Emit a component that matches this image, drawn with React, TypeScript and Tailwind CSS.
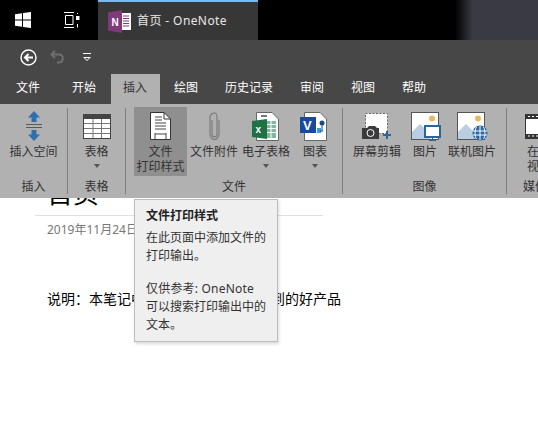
const FONT = "font-['Noto_Sans','Noto_Sans_CJK_SC',sans-serif]";

const TABS = ["文件", "开始", "插入", "绘图", "历史记录", "审阅", "视图", "帮助"];

function WinLogo() {
  return (
    <svg width="16" height="16" viewBox="0 0 16 16" fill="#fff">
      <path d="M0 2.3 7 1.2V7.5H0ZM8 1 16 0V7.5H8ZM0 8.5H7V14.8L0 13.7ZM8 8.5H16V16L8 15Z" />
    </svg>
  );
}

function TaskView() {
  return (
    <svg width="17" height="16" viewBox="0 0 17 16" fill="none" stroke="#fff" strokeWidth="1">
      <path d="M1 .5H11M1 15.5H11M2.5 3.5H10V12.5H2.5Z" />
      <path d="M14.5 1V2M14.5 12V15.5" />
      <rect x="13" y="4" width="3.5" height="4" fill="#fff" stroke="none" />
    </svg>
  );
}

function OneNoteIcon() {
  return (
    <svg width="23" height="23" viewBox="0 0 23 23">
      <rect x="10" y="3" width="13" height="17" fill="#fff" />
      <path d="M15 6H21M15 8.5H21M15 11H21M15 13.5H21M15 16H21" stroke="#80397b" strokeWidth="1.2" />
      <path d="M0 2.5 14 0V23L0 20.5Z" fill="#80397b" />
      <text x="3.5" y="16" fill="#fff" fontSize="10" fontWeight="700" fontFamily="Liberation Sans">N</text>
    </svg>
  );
}

function BackIcon() {
  return (
    <svg width="17" height="17" viewBox="0 0 17 17" fill="none" stroke="#fff">
      <circle cx="8.5" cy="8.5" r="7.5" strokeWidth="1.4" />
      <path d="M13 8.5H5M8.5 5 5 8.5 8.5 12" strokeWidth="2" />
    </svg>
  );
}

function UndoIcon() {
  return (
    <svg width="15" height="14" viewBox="0 0 15 14" fill="none" stroke="#6f6f6f" strokeWidth="2">
      <path d="M5 1 1.5 4.5 5 8M2 4.5H9C14 4.5 14 12 9 12.5H7" />
    </svg>
  );
}

function QatMore() {
  return (
    <svg width="10" height="9" viewBox="0 0 10 9" fill="#fff">
      <path d="M1 0H9V1H1Z" />
      <path d="M1 4H9L5 8ZM3 5 5 7 7 5Z" fillRule="evenodd" />
    </svg>
  );
}

function SpaceIcon() {
  return (
    <svg width="20" height="30" viewBox="0 0 20 30">
      <path d="M10 0 16 6.5H12.5V11H7.5V6.5H4Z" fill="#2f6fb0" />
      <path d="M2 13.5H18M2 16.5H18" stroke="#5a5a5a" />
      <path d="M10 30 16 23.5H12.5V19H7.5V23.5H4Z" fill="#2f6fb0" />
    </svg>
  );
}

function TableIcon() {
  return (
    <svg width="28" height="25" viewBox="0 0 28 25">
      <rect width="28" height="25" fill="#444" />
      <rect x="1" y="5" width="26" height="19" fill="#fff" />
      <path d="M1 9.5H27M1 14.5H27M1 19.5H27M10 5V24M18.500 5V24" stroke="#777" />
    </svg>
  );
}

function PrintoutIcon() {
  return (
    <svg width="21" height="28" viewBox="0 0 21 28">
      <path d="M.5.5H14L20.500 7V27.500H.5Z" fill="#fff" stroke="#333" />
      <path d="M14 .5V7H20.500" fill="none" stroke="#333" />
      <path d="M5 5H12M5 8H12M5 11H16M5 14H16M5 17H16" stroke="#444" />
      <path d="M5 22H16M5 21V27M16 21V27" fill="none" stroke="#444" />
    </svg>
  );
}

function ClipIcon() {
  return (
    <svg width="11" height="28" viewBox="0 0 11 28" fill="none" stroke="#777" strokeWidth="1.1">
      <path d="M3 8V22C3 24 4 25 5.500 25S8 24 8 22V5C8 2.500 7 1 5.500 1S1 2.500 1 5V22C1 25 3 27.500 5.500 27.500S10 25 10 22V8" />
    </svg>
  );
}

function ExcelIcon() {
  return (
    <svg width="27" height="29" viewBox="0 0 27 29" className="mr-[2px]">
      <path d="M4.500.5H20L26.500 7V28.500H4.500Z" fill="#fff" stroke="#666" />
      <path d="M9 4H15" stroke="#777" strokeWidth="2" />
      <path d="M14 9H24V26H14Z" fill="#7fb99a" />
      <path d="M14 12.500H24M14 16.500H24M14 20.500H24M19 9V26" stroke="#fff" />
      <path d="M0 9 15 7V27L0 25Z" fill="#1f7246" />
      <text x="3.500" y="21" fill="#fff" fontSize="10" fontWeight="700" fontFamily="Liberation Sans">x</text>
    </svg>
  );
}

function VisioIcon() {
  return (
    <svg width="27" height="29" viewBox="0 0 27 29" className="mr-[4px]">
      <path d="M4.500.5H20L26.500 7V28.500H4.500Z" fill="#fff" stroke="#666" />
      <rect x="17" y="16" width="4" height="5" fill="#3f9be0" />
      <circle cx="22" cy="11" r="2.500" fill="#174a8b" />
      <path d="M22 12V19M20 19H23" stroke="#174a8b" />
      <rect y="5" width="16" height="16" fill="#174a9b" />
      <text x="3" y="17.500" fill="#fff" fontSize="13" fontWeight="700" fontFamily="Liberation Sans">V</text>
    </svg>
  );
}

function ScreenClipIcon() {
  return (
    <svg width="29" height="28" viewBox="0 0 29 28" className="mr-[2px]">
      <rect x="3.500" y="1.500" width="22" height="20" fill="#fff" stroke="#666" strokeDasharray="2 1.500" />
      <path d="M0 16H5L7 14H13L15 16H17V27H0Z" fill="#3b3b3b" />
      <circle cx="8.500" cy="21" r="3.500" fill="#3b3b3b" stroke="#fff" />
      <path d="M25 19V27M21 23H29" stroke="#2a659e" strokeWidth="2" />
    </svg>
  );
}

function PictureBase() {
  return (
    <>
      <rect x=".5" y=".5" width="27" height="27" fill="#fff" stroke="#555" />
      <circle cx="21" cy="6.500" r="3" fill="#e8b866" />
      <path d="M1 27V20L9 12 19 22V27Z" fill="#b9cde3" />
    </>
  );
}

function PictureIcon() {
  return (
    <svg width="30" height="29" viewBox="0 0 30 29" className="ml-[2px]">
      <PictureBase />
      <rect x="14" y="14" width="15" height="11" fill="#fff" stroke="#2a659e" strokeWidth="2" />
      <path d="M21.500 25V28M18 28.500H25" stroke="#2a659e" />
    </svg>
  );
}

function OnlinePictureIcon() {
  return (
    <svg width="31" height="29" viewBox="0 0 31 29">
      <PictureBase />
      <circle cx="23" cy="21" r="7.500" fill="#2a659e" />
      <path d="M16 19H30M16 23H30M23 14V28M19.500 15C17.500 19 17.500 24 19.500 27M26.500 15C28.500 19 28.500 24 26.500 27" fill="none" stroke="#fff" />
    </svg>
  );
}

function VideoIcon() {
  return (
    <svg width="28" height="25" viewBox="0 0 28 25">
      <rect x=".5" y=".5" width="27" height="24" fill="#fff" stroke="#333" />
      <path d="M1 1H27V5H1ZM1 20H27V24H1Z" fill="#333" />
      <path d="M3 2.500H5M7 2.500H9M11 2.500H13M15 2.500H17M19 2.500H21M23 2.500H25M3 22H5M7 22H9M11 22H13M15 22H17M19 22H21M23 22H25" stroke="#fff" />
    </svg>
  );
}

function Caret() {
  return <span className="mt-[5px] h-0 w-0 border-x-[3.5px] border-t-[4px] border-x-transparent border-t-[#555]" />;
}

function RibbonButton({
  width,
  icon,
  lines,
  caret,
  active,
}: {
  width: string;
  icon: React.ReactNode;
  lines: string[];
  caret?: boolean;
  active?: boolean;
}) {
  return (
    <div className={`-mt-px flex h-[69px] shrink-0 flex-col items-center pt-1 ${width} ${active ? "bg-[#8f8f8f]" : ""}`}>
      <div className="flex h-[30px] items-center justify-center">{icon}</div>
      <div className="mt-[3px] text-center text-xs leading-[15px] whitespace-nowrap text-[#333]">
        {lines.map((l) => (
          <div key={l}>{l}</div>
        ))}
      </div>
      {caret && <Caret />}
    </div>
  );
}

function Group({
  width,
  label,
  last,
  className,
  children,
}: {
  width: string;
  label: string;
  last?: boolean;
  className?: string;
  children: React.ReactNode;
}) {
  return (
    <div className={`flex h-[86px] shrink-0 flex-col ${width} ${last ? "" : "border-r border-[#7f7f7f]"}`}>
      <div className={`flex flex-1 ${className ?? ""}`}>{children}</div>
      <div className={`h-[15px] text-xs leading-[15px] text-[#333] ${last ? "pl-4" : "text-center"}`}>{label}</div>
    </div>
  );
}

export default function App() {
  return (
    <div className={`relative h-[429px] w-[538px] overflow-hidden bg-white ${FONT}`}>
      {/* 任务栏 */}
      <div className="flex h-10 items-stretch bg-black">
        <div className="flex w-[31px] items-center justify-end">
          <WinLogo />
        </div>
        <div className="ml-8 flex w-[35px] items-center"><TaskView /></div>
        <div className="flex w-[160px] items-center gap-[6px] border-t-2 border-[#76b9ed] bg-[#373737] pl-[10px]">
          <OneNoteIcon />
          <span className="text-xs tracking-[0.4px] whitespace-nowrap text-[#e8e8e8]">首页 - OneNote</span>
        </div>
        <div className="ml-auto w-[83px] bg-[linear-gradient(90deg,#000_0,#3a3a44_18px)]" />
      </div>

      {/* 快速访问工具栏 */}
      <div className="flex h-[34px] items-center bg-[#474747] pl-5">
        <BackIcon />
        <div className="ml-[13px]"><UndoIcon /></div>
        <div className="ml-[17px]"><QatMore /></div>
      </div>

      {/* 选项卡 */}
      <div className="flex h-[30px] gap-[2px] bg-[#474747] pl-[3.5px]">
        {TABS.map((t, i) => (
          <div
            key={t}
            className={`flex items-center px-[12.5px] pb-[2px] text-xs ${i === 0 ? "mr-[5px]" : ""} ${t === "插入" ? "bg-[#b1b1b1] text-[#333]" : "text-white"}`}
          >
            {t}
          </div>
        ))}
      </div>

      {/* 功能区 */}
      <div className="relative z-10 flex h-[94px] overflow-hidden bg-[#b1b1b1] pt-1">
        <Group width="w-[68px]" label="插入">
          <RibbonButton width="w-[67px]" icon={<SpaceIcon />} lines={["插入空间"]} />
        </Group>
        <Group width="w-[58px]" label="表格">
          <RibbonButton width="w-[57px]" icon={<TableIcon />} lines={["表格"]} caret />
        </Group>
        <Group width="w-[217px]" label="文件" className="pl-2">
          <RibbonButton width="w-[53px]" active icon={<PrintoutIcon />} lines={["文件", "打印样式"]} />
          <RibbonButton width="w-[54px]" icon={<ClipIcon />} lines={["文件附件"]} />
          <RibbonButton width="w-[50px]" icon={<ExcelIcon />} lines={["电子表格"]} caret />
          <RibbonButton width="w-[48px]" icon={<VisioIcon />} lines={["图表"]} caret />
        </Group>
        <Group width="w-[164px]" label="图像" className="pl-[10px]">
          <RibbonButton width="w-[48px]" icon={<ScreenClipIcon />} lines={["屏幕剪辑"]} />
          <RibbonButton width="w-[48px]" icon={<PictureIcon />} lines={["图片"]} />
          <RibbonButton width="w-[46px]" icon={<OnlinePictureIcon />} lines={["联机图片"]} />
        </Group>
        <Group width="w-[60px]" label="媒体" last className="pl-2">
          <RibbonButton width="w-[48px]" icon={<VideoIcon />} lines={["在线", "视频"]} />
        </Group>
      </div>

      {/* 页面内容 */}
      <div className="pl-[35px]">
        <div className="w-[288px] border-b border-[#e0e0e0] pb-[8px] pl-3">
          <div className="-mt-[18px] text-[26px] leading-[27px] text-black">首页</div>
        </div>
        <div className="mt-[5px] pl-3 text-xs leading-[18px] text-[#777]">2019年11月24日</div>
        <div className="mt-[50px] pl-3 text-sm leading-5 text-black">说明：本笔记中介绍了微软公司新买到的好产品</div>
      </div>

      {/* 提示框 */}
      <div className="absolute top-[199px] left-[134px] z-20 h-[143px] w-[144px] border border-[#bdbdbd] bg-[#efefef] pt-[7px] pl-[11px] text-xs leading-[18px] text-[#333] shadow-[1px_2px_3px_rgba(0,0,0,0.15)]">
        <div className="font-bold text-[#222]">文件打印样式</div>
        <div className="mt-[4px]">在此页面中添加文件的</div>
        <div>打印输出。</div>
        <div className="mt-[15px] tracking-[0.2px]">仅供参考: OneNote</div>
        <div>可以搜索打印输出中的</div>
        <div>文本。</div>
      </div>
    </div>
  );
}
